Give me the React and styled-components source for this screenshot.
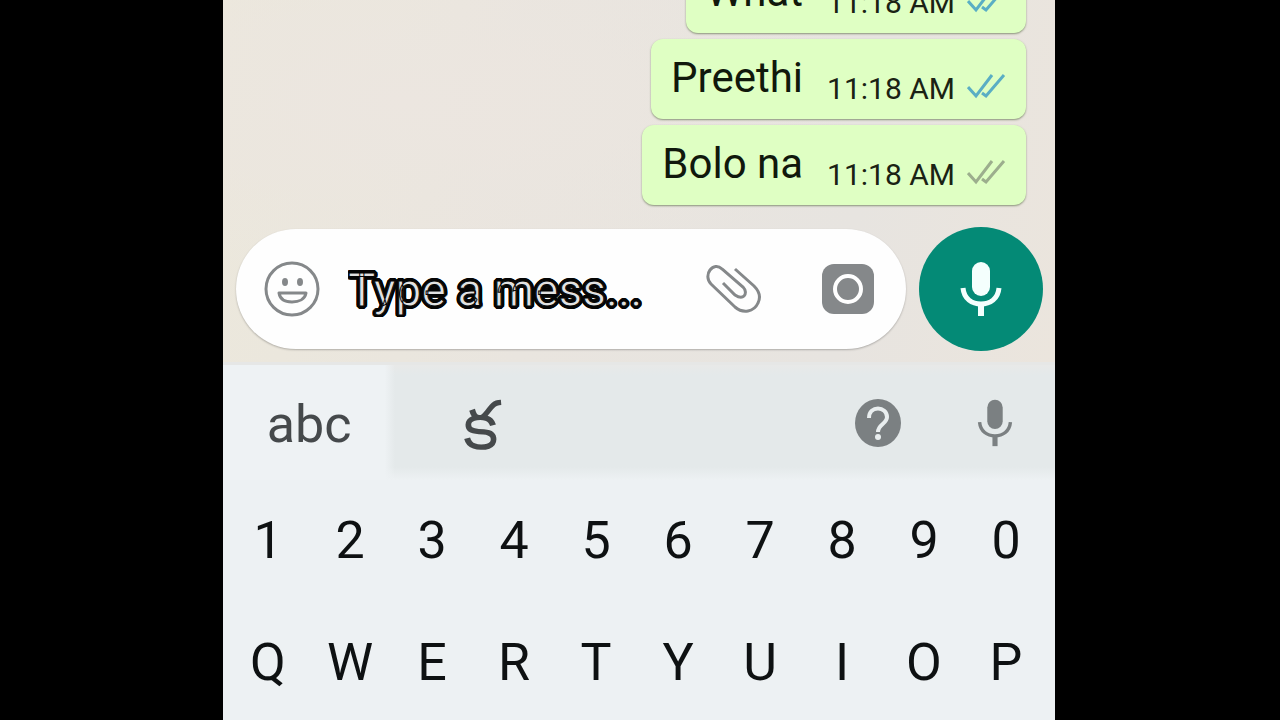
import React, { Component } from 'react';
import styled, { createGlobalStyle } from 'styled-components';

const GlobalStyle = createGlobalStyle`
  * {
    box-sizing: border-box;
  }
  body {
    margin: 0;
    background: #000;
    font-family: Roboto, 'Noto Sans', sans-serif;
  }
  button {
    border: none;
    padding: 0;
    background: none;
    font: inherit;
    color: inherit;
    cursor: pointer;
  }
  svg {
    display: block;
  }
`;

const PageStyle = styled.div`
  & {
    display: flex;
    justify-content: center;
    height: 100vh;
    padding-right: 2px;
    overflow: hidden;
  }
`;

const PhoneStyle = styled.main`
  & {
    display: flex;
    flex-direction: column;
    flex: none;
    width: 65vw;
    background: #edf1f3;
  }
`;

const ChatStyle = styled.section`
  & {
    display: flex;
    flex-direction: column;
    flex: 1;
    min-height: 0;
    overflow: hidden;
    background: radial-gradient(
        ellipse at 22% 28%,
        #ece6e0 0%,
        rgba(236, 230, 224, 0) 50%
      ),
      linear-gradient(100deg, #ece8dc 0%, #e9e5df 40%, #e7e4e0 75%, #ebe5dd 100%);
  }
`;

const MessageList = styled.ul`
  & {
    display: flex;
    flex-direction: column;
    align-items: flex-end;
    justify-content: flex-end;
    gap: 6px;
    flex: 1;
    min-height: 0;
    margin: 0;
    padding: 0 29px 22px;
    list-style: none;
  }
`;

const BubbleStyle = styled.li`
  & {
    display: flex;
    flex: none;
    gap: 24px;
    padding: 0 20px;
    border-radius: 12px;
    background: #dfffc3;
    box-shadow: 0 1px 2px rgba(60, 80, 40, 0.55);
    color: #10180c;
  }
  & .text {
    padding-bottom: 2px;
    font-size: 42px;
    line-height: 78px;
  }
  & .meta {
    display: flex;
    align-items: center;
    align-self: flex-end;
    gap: 12px;
    padding-bottom: 10px;
    font-size: 30px;
    line-height: 40px;
    color: #1a2214;
  }
`;

const ComposerStyle = styled.form`
  & {
    display: flex;
    align-items: center;
    gap: 13px;
    padding: 0 12px 11px 13px;
  }
`;

const InputPill = styled.div`
  & {
    display: flex;
    align-items: center;
    flex: 1;
    min-width: 0;
    height: 120px;
    padding: 0 32px 0 28px;
    border-radius: 60px;
    background: #fefefe;
    box-shadow: 0 1px 2px rgba(0, 0, 0, 0.25);
    color: #85888a;
  }
  & input {
    flex: 1;
    min-width: 0;
    height: 72px;
    margin: 0 24px;
    padding: 2px 4px 0;
    border: none;
    outline: none;
    background: none;
    font: 46px Roboto, sans-serif;
    color: #222;
  }
  & input::placeholder {
    color: #e2e2e2;
    opacity: 1;
    -webkit-text-stroke: 1px #050505;
    text-shadow: 3px 0 #050505, -3px 0 #050505, 0 3px #050505, 0 -3px #050505,
      2px 2px #050505, -2px 2px #050505, 2px -2px #050505, -2px -2px #050505,
      3px 1px #050505, -3px 1px #050505, 3px -1px #050505, -3px -1px #050505,
      1px 3px #050505, -1px 3px #050505, 1px -3px #050505, -1px -3px #050505;
  }
  & .camera {
    margin-left: 60px;
  }
`;

const RecordButton = styled.button`
  & {
    display: flex;
    align-items: center;
    justify-content: center;
    width: 124px;
    height: 124px;
    border-radius: 50%;
    background: #048a76;
    color: #f4fffd;
  }
`;

const KeyboardStyle = styled.section`
  & {
    border-top: 3px solid #e6e7e6;
    background: #edf1f3;
  }
`;

const SuggestionBar = styled.div`
  & {
    display: flex;
    align-items: stretch;
    height: 115px;
    background: linear-gradient(#e8e9e8, #e4e9ea 10px 102px, #edf1f3);
    color: #7b8082;
  }
  & .tools {
    display: flex;
    align-items: center;
    gap: 70px;
    margin-left: auto;
    padding-right: 36px;
  }
`;

const LanguageTab = styled.button`
  & {
    width: 172px;
    padding-top: ${({ $script }) => ($script === 'telugu' ? '6px' : '4px')};
    background: ${({ $active }) =>
      $active
        ? 'linear-gradient(90deg, #eef2f4 94%, rgba(238, 242, 244, 0))'
        : 'transparent'};
    font-size: ${({ $script }) => ($script === 'telugu' ? '68px' : '52px')};
    line-height: 60px;
    color: #45494b;
  }
`;

const KeyGrid = styled.div`
  & {
    display: grid;
    grid-template-columns: repeat(10, 1fr);
    row-gap: 64px;
    padding: 32px 8px 28px 4px;
  }
`;

const Key = styled.button`
  & {
    height: 58px;
    font-size: 52px;
    line-height: 58px;
    text-align: center;
    color: #0e1112;
  }
`;

const messages = [
  { id: 1, text: 'What', time: '11:18 AM', read: true },
  { id: 2, text: 'Preethi', time: '11:18 AM', read: true },
  { id: 3, text: 'Bolo na', time: '11:18 AM', read: false },
];

const keys = [...'1234567890', ...'QWERTYUIOP'];

const Ticks = ({ read }) => (
  <svg
    width="39"
    height="30"
    viewBox="0 0 39 30"
    fill="none"
    stroke={read ? '#5aaec4' : '#9cae8d'}
    strokeWidth="3"
    role="img"
    aria-label={read ? 'Read' : 'Delivered'}
  >
    <path d="M1 13 L9 22 L25 1" />
    <path d="M15 19 L19 22 L37 1" />
  </svg>
);

const SmileIcon = () => (
  <svg width="56" height="56" viewBox="0 0 56 56" fill="none">
    <circle cx="28" cy="28" r="26" stroke="currentColor" strokeWidth="3" />
    <ellipse cx="21" cy="21" rx="3" ry="4" fill="currentColor" />
    <ellipse cx="36" cy="21" rx="3" ry="4" fill="currentColor" />
    <path
      d="M15 32 H42 C41 38 35 41 28 41 C21 41 16 38 15 32 Z"
      stroke="currentColor"
      strokeWidth="3"
      strokeLinejoin="round"
    />
  </svg>
);

const ClipIcon = () => (
  <svg
    width="56"
    height="52"
    viewBox="0 0 56 52"
    fill="none"
    stroke="currentColor"
    strokeWidth="3"
  >
    <path d="M29 6 L48 23 C53 28 55 34 52 40 C48 49 37 51 29 44 L5 21 C1 17 1 11 4 7 C7 3 12 2 16 6 L37 24 C40 27 40 31 38 33 C36 35 32 34 29 32 L17 20" />
  </svg>
);

const CameraIcon = () => (
  <svg width="52" height="52" viewBox="0 0 52 52">
    <rect x="0" y="1" width="52" height="50" rx="12" fill="currentColor" />
    <circle
      cx="26"
      cy="26"
      r="13"
      fill="none"
      stroke="#fff"
      strokeWidth="4"
    />
  </svg>
);

const MicIcon = ({ size, stroke }) => (
  <svg width={size} height={size} viewBox="0 0 56 56" fill="none">
    <rect x="19" y="1" width="18" height="34" rx="9" fill="currentColor" />
    <path
      d="M10 27 C11 38 19 43 28 43 C37 43 45 38 46 27"
      stroke="currentColor"
      strokeWidth={stroke}
    />
    <path d="M28 42 V55" stroke="currentColor" strokeWidth="6" />
  </svg>
);

const HelpIcon = () => (
  <svg width="46" height="48" viewBox="0 0 46 48" fill="none">
    <ellipse cx="23" cy="24" rx="23" ry="24" fill="currentColor" />
    <path
      d="M14 19 C14 6 32 7 32 18 C32 25 23 25 23 33"
      stroke="#e9eeef"
      strokeWidth="4"
    />
    <circle cx="23" cy="38" r="3" fill="#e9eeef" />
  </svg>
);

class Bubble extends Component {
  render() {
    const { text, time, read } = this.props;
    return (
      <BubbleStyle>
        <span className="text">{text}</span>
        <span className="meta">
          <time>{time}</time>
          <Ticks read={read} />
        </span>
      </BubbleStyle>
    );
  }
}

class Composer extends Component {
  render() {
    return (
      <ComposerStyle onSubmit={(e) => e.preventDefault()}>
        <InputPill>
          <button type="button" aria-label="Emoji">
            <SmileIcon />
          </button>
          <input type="text" aria-label="Message" placeholder="Type a mess..." />
          <button type="button" aria-label="Attach">
            <ClipIcon />
          </button>
          <button type="button" className="camera" aria-label="Camera">
            <CameraIcon />
          </button>
        </InputPill>
        <RecordButton type="button" aria-label="Record voice message">
          <MicIcon size={56} stroke={5} />
        </RecordButton>
      </ComposerStyle>
    );
  }
}

class Keyboard extends Component {
  render() {
    return (
      <KeyboardStyle>
        <SuggestionBar>
          <LanguageTab type="button" $script="latin" $active>
            abc
          </LanguageTab>
          <LanguageTab type="button" $script="telugu" lang="te">
            క
          </LanguageTab>
          <div className="tools">
            <button type="button" aria-label="Help">
              <HelpIcon />
            </button>
            <button type="button" aria-label="Voice typing">
              <MicIcon size={48} stroke={4} />
            </button>
          </div>
        </SuggestionBar>
        <KeyGrid>
          {keys.map((key) => (
            <Key type="button" key={key}>
              {key}
            </Key>
          ))}
        </KeyGrid>
      </KeyboardStyle>
    );
  }
}

export default class App extends Component {
  render() {
    return (
      <PageStyle>
        <GlobalStyle />
        <PhoneStyle>
          <ChatStyle>
            <MessageList>
              {messages.map((message) => (
                <Bubble key={message.id} {...message} />
              ))}
            </MessageList>
            <Composer />
          </ChatStyle>
          <Keyboard />
        </PhoneStyle>
      </PageStyle>
    );
  }
}
